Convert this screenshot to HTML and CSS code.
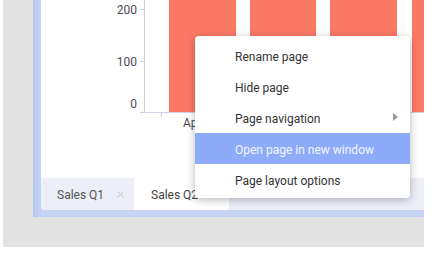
FILE: index.html
```html
<!DOCTYPE html>
<html lang="en">
<head>
    <title>Report pages</title>
    <link rel="stylesheet" href="styles.css">
</head>
<body>

<div class="stage">
    <div class="window">
        <div class="page">
            <svg class="chart" width="383" height="178" viewBox="0 0 383 178">
                <!-- bars -->
                <rect class="bar" x="128" y="0" width="67" height="112"/>
                <rect class="bar" x="209" y="0" width="66" height="112"/>
                <rect class="bar" x="289" y="0" width="67" height="112"/>
                <rect class="bar" x="371" y="0" width="67" height="112"/>
                <!-- axes -->
                <line class="axis" x1="103.5" y1="0" x2="103.5" y2="112"/>
                <line class="axis" x1="99" y1="112.5" x2="383" y2="112.5"/>
                <line class="axis" x1="99" y1="9.5" x2="103" y2="9.5"/>
                <line class="axis" x1="99" y1="61.5" x2="103" y2="61.5"/>
                <line class="axis" x1="120.5" y1="112" x2="120.5" y2="117"/>
                <text class="tick" x="96" y="13.5" text-anchor="end">200</text>
                <text class="tick" x="96" y="66" text-anchor="end">100</text>
                <text class="tick" x="96" y="107.5" text-anchor="end">0</text>
                <text class="tick" x="142" y="127">April</text>
            </svg>
            <div class="tabbar">
                <div class="tab">
                    Sales Q1
                    <svg class="close" width="7" height="7" viewBox="0 0 7 7">
                        <path d="M0.5 0.5 L6.5 6.5 M6.5 0.5 L0.5 6.5"/>
                    </svg>
                </div>
                <div class="tab active">Sales Q2</div>
            </div>
        </div>
    </div>
</div>

<ul class="menu">
    <li>Rename page</li>
    <li>Hide page</li>
    <li>Page navigation <span class="arrow"></span></li>
    <li class="hl">Open page in new window</li>
    <li>Page layout options</li>
</ul>

</body>
</html>
```

FILE: styles.css
```css
body { margin: 0; background: #fff; font-family: Roboto, "Liberation Sans", sans-serif; font-size: 12px; }

.stage { margin-left: 3px; width: 421px; height: 247px; padding-left: 30px; box-sizing: border-box; background: #e2e2e2; overflow: hidden; }
.window { height: 217px; padding: 0 0 7px 8px; box-sizing: border-box; background: linear-gradient(to right, #b4c5ec, #c6d4f3 8px); }
.page { height: 210px; display: flex; flex-direction: column; background: #fff; border-radius: 0 0 0 4px; overflow: hidden; }

.chart { display: block; flex: none; }
.chart .bar { fill: #fa7965; }
.chart .axis { stroke: #cdd0e2; stroke-width: 1; }
.chart .tick { fill: #4a4a55; font-family: Roboto, "Liberation Sans", sans-serif; font-size: 12px; }

.tabbar { height: 32px; display: flex; background: #eceef8; }
.tab { width: 93px; padding: 1px 0 0 16px; box-sizing: border-box; display: flex; align-items: center; color: #555; }
.tab.active { width: 95px; padding-left: 17px; background: #fff; color: #444; border-radius: 0 0 3px 3px; }
.tab .close { margin-left: 13px; }
.tab .close path { stroke: #c4c4c8; stroke-width: 1; fill: none; }

.menu { position: absolute; left: 195px; top: 36px; width: 215px; margin: 0; padding: 4px 0 3px; list-style: none; background: #fff; border-radius: 4px; box-shadow: 0 2px 8px rgba(0, 0, 0, 0.28); }
.menu li { position: relative; padding: 3px 0 0 40px; line-height: 28px; color: #333; }
.menu li.hl { background: #8eabfa; color: #f2f5ff; }
.menu .arrow { position: absolute; right: 12px; top: 11px; width: 0; height: 0; border-left: 5px solid #9a9a9a; border-top: 4.5px solid transparent; border-bottom: 4.5px solid transparent; }
```
